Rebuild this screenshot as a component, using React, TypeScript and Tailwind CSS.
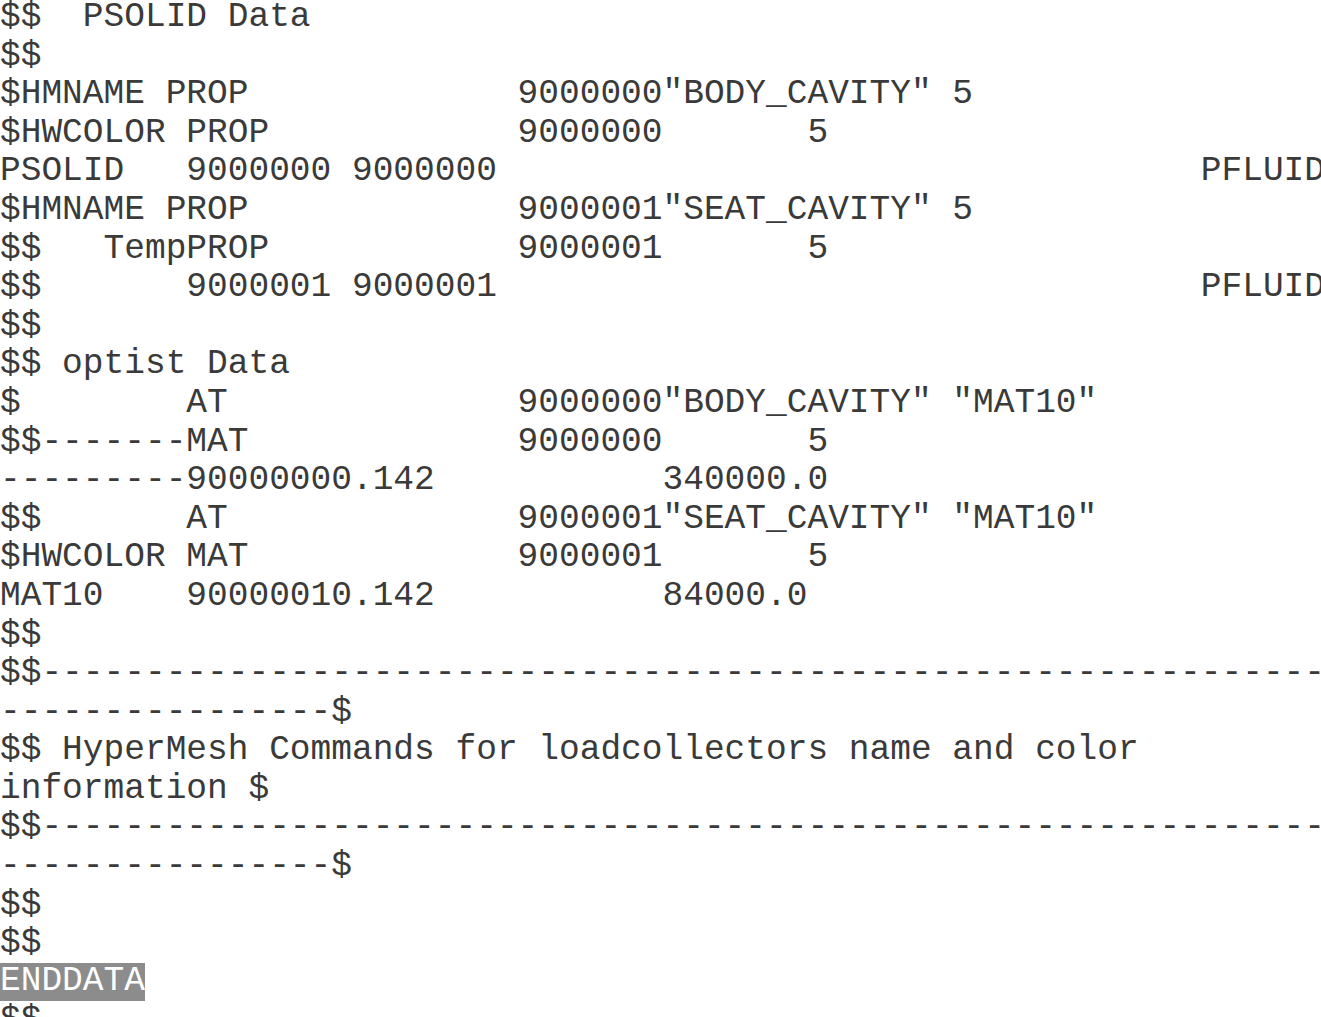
import React from "react";

// place text pieces at fixed character columns, like a fixed-format deck
const at = (...parts: [number, string][]): string => {
  let s = "";
  for (const [col, text] of parts) {
    s = s.padEnd(col, " ") + text;
  }
  return s;
};

const dashes = "-".repeat(80);

const lines: string[] = [
  "$$  PSOLID Data",
  "$$",
  at([0, "$HMNAME PROP"], [25, '9000000"BODY_CAVITY" 5']),
  at([0, "$HWCOLOR PROP"], [25, "9000000"], [39, "5"]),
  at([0, "PSOLID"], [9, "9000000 9000000"], [58, "PFLUID"]),
  at([0, "$HMNAME PROP"], [25, '9000001"SEAT_CAVITY" 5']),
  at([0, "$$   TempPROP"], [25, "9000001"], [39, "5"]),
  at([0, "$$"], [9, "9000001 9000001"], [58, "PFLUID"]),
  "$$",
  "$$ optist Data",
  at([0, "$"], [9, "AT"], [25, '9000000"BODY_CAVITY" "MAT10"']),
  at([0, "$$-------MAT"], [25, "9000000"], [39, "5"]),
  at([0, "---------90000000.142"], [32, "340000.0"]),
  at([0, "$$"], [9, "AT"], [25, '9000001"SEAT_CAVITY" "MAT10"']),
  at([0, "$HWCOLOR MAT"], [25, "9000001"], [39, "5"]),
  at([0, "MAT10"], [9, "90000010.142"], [32, "84000.0"]),
  "$$",
  "$$" + dashes,
  "----------------$",
  "$$ HyperMesh Commands for loadcollectors name and color",
  "information $",
  "$$" + dashes,
  "----------------$",
  "$$",
  "$$",
];

export default function App() {
  return (
    <div className="w-[1321px] h-[1017px] overflow-hidden bg-white">
      <pre className="-mt-[2px] font-['Liberation_Mono','Courier_New',monospace] text-[34.5px] leading-[38.6px] text-[#3a3a3a] whitespace-pre">
        {lines.map((line, i) => (
          <div key={i} className="h-[38.6px]">
            {line}
          </div>
        ))}
        <div className="h-[38.6px]">
          <span className="inline-block align-top h-[38px] leading-[36px] bg-[#8c8c8c] text-white">ENDDATA</span>
        </div>
        <div className="h-[38.6px]">$$</div>
      </pre>
    </div>
  );
}
